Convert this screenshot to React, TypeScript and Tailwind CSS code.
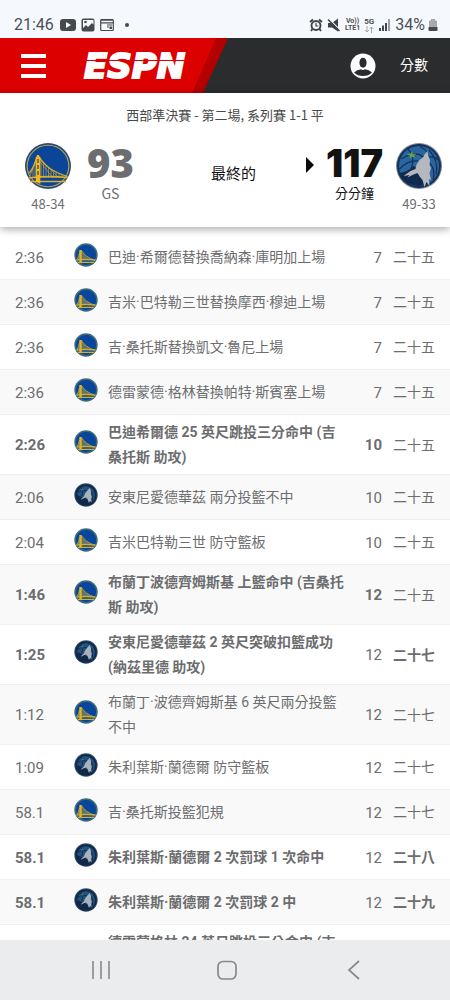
import React from "react";

type Team = "GS" | "MIN";

interface Play {
  time: string;
  team: Team;
  text: string;
  away: string;
  home: string;
  scored?: Team;
}

const plays: Play[] = [
  { time: "2:36", team: "GS", text: "巴迪·希爾德替換喬納森·庫明加上場", away: "7", home: "二十五" },
  { time: "2:36", team: "GS", text: "吉米·巴特勒三世替換摩西·穆迪上場", away: "7", home: "二十五" },
  { time: "2:36", team: "GS", text: "吉·桑托斯替換凱文·魯尼上場", away: "7", home: "二十五" },
  { time: "2:36", team: "GS", text: "德雷蒙德·格林替換帕特·斯賓塞上場", away: "7", home: "二十五" },
  { time: "2:26", team: "GS", text: "巴迪希爾德 25 英尺跳投三分命中 (吉桑托斯 助攻)", away: "10", home: "二十五", scored: "GS" },
  { time: "2:06", team: "MIN", text: "安東尼愛德華茲 兩分投籃不中", away: "10", home: "二十五" },
  { time: "2:04", team: "GS", text: "吉米巴特勒三世 防守籃板", away: "10", home: "二十五" },
  { time: "1:46", team: "GS", text: "布蘭丁波德齊姆斯基 上籃命中 (吉桑托斯 助攻)", away: "12", home: "二十五", scored: "GS" },
  { time: "1:25", team: "MIN", text: "安東尼愛德華茲 2 英尺突破扣籃成功 (納茲里德 助攻)", away: "12", home: "二十七", scored: "MIN" },
  { time: "1:12", team: "GS", text: "布蘭丁·波德齊姆斯基 6 英尺兩分投籃不中", away: "12", home: "二十七" },
  { time: "1:09", team: "MIN", text: "朱利葉斯·蘭德爾 防守籃板", away: "12", home: "二十七" },
  { time: "58.1", team: "GS", text: "吉·桑托斯投籃犯規", away: "12", home: "二十七" },
  { time: "58.1", team: "MIN", text: "朱利葉斯·蘭德爾 2 次罰球 1 次命中", away: "12", home: "二十八", scored: "MIN" },
  { time: "58.1", team: "MIN", text: "朱利葉斯·蘭德爾 2 次罰球 2 中", away: "12", home: "二十九", scored: "MIN" },
  { time: "42.0", team: "GS", text: "德雷蒙格林 24 英尺跳投三分命中 (吉桑托斯 助攻)", away: "15", home: "二十九", scored: "GS" },
];

function WarriorsLogo({ className }: { className: string }) {
  return (
    <svg viewBox="0 0 46 46" className={className} role="img" aria-label="GS">
      <circle cx="23" cy="23" r="23" fill="#274b7c" />
      <circle cx="23" cy="23" r="20.8" fill="#0a4597" stroke="#b9a24a" strokeWidth="1.1" />
      <g stroke="#dfae2c" fill="none">
        <path d="M14 13.5Q21 27 42.5 33.5M12 13.5Q9 24 4.5 30" strokeWidth="1.3" />
        <path
          d="M16 17V35M18.5 20.500V35M21 23V35M23.500 25V35M26 27V35M28.500 28.500V35M31 29.500V35M34 31V35M37 32V35M10 20V35M8 25V35"
          strokeWidth=".6"
        />
        <path d="M14.500 15L34 35M14.500 18L28 35M11.500 16L5 33" strokeWidth=".6" />
        <path d="M3.500 35Q23 32.500 42.500 34.500M5 38.500H41" strokeWidth="1.7" />
      </g>
      <path d="M10.800 14h1.100v-2h2.200v2h1.200v27l-4.500-2.500z" fill="#f8b81c" />
      <path d="M12.400 16h1.200v4h-1.200zm0 6h1.200v4h-1.200zm0 6h1.200v4h-1.200z" fill="#0a4597" />
    </svg>
  );
}

function WarriorsBadge({ className }: { className: string }) {
  return (
    <svg viewBox="0 0 24 24" className={className} role="img" aria-label="GS">
      <circle cx="12" cy="12" r="11.700" fill="#416c7c" />
      <circle cx="12" cy="12" r="10.200" fill="#08469b" />
      <path d="M7.500 7.500Q11 14 21 17.500H7.500zM5.500 10L3 17h2.500z" fill="#64736a" />
      <path d="M7.500 7.500Q11 14 21 17.200M5.500 9.500Q5 14 3 16.500" stroke="#b9a33b" strokeWidth=".9" fill="none" />
      <path d="M2.500 17.200Q12 15.500 21.500 17.200M4 19.300H20" stroke="#d5b02a" strokeWidth="1.200" fill="none" />
      <path d="M5.300 7h2.500v13.500l-2.500-1.200z" fill="#dcb425" />
    </svg>
  );
}

function WolvesLogo({ className }: { className: string }) {
  return (
    <svg viewBox="0 0 46 46" className={className} role="img" aria-label="MIN">
      <circle cx="23" cy="23" r="23" fill="#778696" />
      <circle cx="23" cy="23" r="22" fill="#14305a" />
      <circle cx="23" cy="23" r="20" fill="#2a659c" />
      <g fill="none" stroke="#14305a" strokeWidth="1.200">
        <path d="M5 16Q20 7 27 14M12 6Q20 14 15 26M3.500 26Q12 17 22 18M24 3.500Q29 6 31 9M33 14Q39 13 42 17M34 20Q40 28 37 37M33 7Q43 18 40 31" />
      </g>
      <path d="M3.500 30q8-1 14-7l9 6 7 11q-5 3-10.500 3Q8 42 3.500 30z" fill="#10294c" />
      <path
        d="M31.500 8l-3 3.500-1 2.500-4 3-3 4.500-1 4.500-5 2-7 5 6-1-2 2.500 6-3 4-1.500 2.500 4 2.500 3 2 7 2-5 3 4-.5-7 2 1-1.500-7 1.500-5-1.500-3 .5-5-2-4.500z"
        fill="#b5b9bf"
      />
      <path d="M16 8.500l.9 2.500 3.600-.2-2.700 1.900 1.500 2.500-3-1.400-2.300 2v-2.800L10.500 11l3.700-.3z" fill="#5fa04a" />
    </svg>
  );
}

function WolvesBadge({ className }: { className: string }) {
  return (
    <svg viewBox="0 0 24 24" className={className} role="img" aria-label="MIN">
      <circle cx="12" cy="12" r="11.700" fill="#37536b" />
      <circle cx="12" cy="12" r="10.800" fill="#10294a" />
      <path d="M3 12Q4 4 12 3Q20 4 21 12Q21 16 18.500 18.500L8 14z" fill="#225280" />
      <path d="M4 9Q9 6 13 8M7 5Q10 8 8 13M17.500 8Q20 13 18 18" stroke="#10294a" strokeWidth=".9" fill="none" />
      <path
        d="M15.800 5l1.300 3.500-.3 3 1 2-.7 2.500.5 3.500-1.600-1.500-1 2-1.500-4-1.500-1.500-2.200.8-3 1.500 1.200-1.800 2-1.500 1-3 2-2.500z"
        fill="#a9b1b9"
      />
      <path d="M8.500 5l.4 1.100 1.300.1-1.100.7.300 1.100-1.100-.7-1.200.6.4-1.200-1-.7 1.500-.1z" fill="#3f7573" />
    </svg>
  );
}

function StatusBar() {
  return (
    <div className="flex h-[38px] shrink-0 items-end justify-between bg-[#f5f9fe] pr-3 pb-[3px] pl-[14px] text-[16px] text-[#4c4f53]">
      <div className="flex h-5 items-center">
        <span>21:46</span>
        <svg viewBox="0 0 18 14" className="ml-[5px] h-[14px] w-[18px]" aria-hidden="true">
          <rect x="1" y="1" width="16" height="12" rx="3" fill="#47494d" />
          <path d="M7 4v6l5-3z" fill="#f5f9fe" />
        </svg>
        <svg viewBox="0 0 14 14" className="ml-1 size-[14px]" aria-hidden="true">
          <rect x=".5" y=".5" width="13" height="13" rx="2" fill="#47494d" />
          <path d="M2 10l3-3 2 2 4-4 1.500 1.500V2H2z" fill="#f5f9fe" />
          <circle cx="4.500" cy="4" r="1.300" fill="#47494d" />
        </svg>
        <svg viewBox="0 0 14 14" className="ml-[5px] size-[14px]" fill="none" stroke="#47494d" aria-hidden="true">
          <rect x=".7" y="1.500" width="12.600" height="11" rx="1" strokeWidth="1.200" />
          <path d="M1 4.800h12M1 2h12" strokeWidth="1.300" />
          <path d="M7 7h5M7 9h2" strokeWidth="1" />
          <path d="M9.500 8.500h2.500v2.500H9.500z" fill="#47494d" stroke="none" />
        </svg>
        <span className="ml-[11px] size-1 rounded-full bg-[#47494d]" />
      </div>
      <div className="flex h-5 items-center">
        <svg viewBox="0 0 14 14" className="size-[14px]" fill="none" stroke="#3f4145" aria-hidden="true">
          <circle cx="7" cy="7.500" r="4.500" strokeWidth="1.900" />
          <path d="M1 4l3-2.500M13 4l-3-2.500M3.500 11l-1.500 2M10.500 11l1.500 2" strokeWidth="1.900" />
          <path d="M7 5v3h2.200" strokeWidth="1.200" />
        </svg>
        <svg viewBox="0 0 14 14" className="ml-1 size-[14px]" aria-hidden="true">
          <path d="M1 5h4l6-4.500v13L5 9.500H1z" fill="#3f4145" />
          <path d="M2 1l11 11" stroke="#f5f9fe" strokeWidth="1.200" />
          <path d="M1 1.500l11.500 11.500" stroke="#3f4145" strokeWidth="1.600" />
        </svg>
        <span className="ml-1 text-center text-[7px] leading-[7px] font-bold">
          Vo))
          <br />
          LTE1
        </span>
        <span className="ml-1 flex flex-col items-center text-[8px] leading-[8px] font-bold">
          5G
          <svg viewBox="0 0 10 7" className="h-[7px] w-[10px]" fill="none" stroke="#a3a6aa" aria-hidden="true">
            <path d="M3 0v6M1 4l2 2 2-2M7.500 7V1M5.500 3l2-2 2 2" />
          </svg>
        </span>
        <svg viewBox="0 0 12 12" className="ml-[5px] size-3" aria-hidden="true">
          <path d="M0 9h2v3H0zM3 6.500h2V12H3zM6 4h2v8H6z" fill="#47494d" />
          <path d="M9 0h2v12H9z" fill="#9b9da1" />
        </svg>
        <span className="ml-1">34%</span>
        <svg viewBox="0 0 10 14" className="ml-[3px] h-[14px] w-[10px]" aria-hidden="true">
          <path d="M3 1h4v1.500h1.500q.5 0 .5.500v6H1V3q0-.5.500-.5H3z" fill="#a7a9ac" />
          <path d="M.5 9h9v3q0 1-1 1h-7q-1 0-1-1z" fill="#47494d" />
        </svg>
      </div>
    </div>
  );
}

function SiteHeader() {
  return (
    <header className="flex h-[55px] shrink-0 items-center justify-between bg-[#2b2c2d] pr-[22px]">
      <div className="h-full w-[228px] bg-[#b30101] [clip-path:polygon(0_0,100%_0,203px_100%,0_100%)]">
        <div className="flex h-full items-center bg-[#dd0000] pl-[21px] [clip-path:polygon(0_0,216px_0,192px_100%,0_100%)]">
          <button type="button" aria-label="選單" className="flex w-[25px] flex-col gap-[6px]">
            <span className="h-1 bg-white" />
            <span className="h-1 bg-white" />
            <span className="h-1 bg-white" />
          </button>
          <a
            href="#home"
            className="relative ml-[38px] font-['DejaVu_Sans'] text-[34px] leading-9 font-bold text-white italic [-webkit-text-stroke:2px_white]"
          >
            ESPN
            <span className="absolute -inset-x-1 top-3 h-px bg-[#dd0000]" />
          </a>
        </div>
      </div>
      <div className="flex items-center gap-[24px]">
        <button type="button" aria-label="帳戶">
          <svg viewBox="0 0 26 26" className="size-[26px]" aria-hidden="true">
            <circle cx="13" cy="13" r="12.500" fill="#fff" />
            <ellipse cx="13" cy="9.800" rx="3.600" ry="5" fill="#2b2c2d" />
            <path d="M4 19.500Q7 16.800 11 16.300q2 1.200 4 0 4 .5 7 3.200-3.500 3.500-9 3.500t-9-3.500z" fill="#2b2c2d" />
          </svg>
        </button>
        <a href="#scores" className="text-[14px] text-white">
          分數
        </a>
      </div>
    </header>
  );
}

function Scoreboard() {
  return (
    <section className="relative shrink-0 bg-white pt-3 pb-[13px] font-['Noto_Sans_CJK_TC',sans-serif] text-[#48494a] shadow-[0_2px_8px_rgba(0,0,0,0.35)]">
      <p className="text-center text-[13px] leading-5">西部準決賽 - 第二場, 系列賽 1-1 平</p>
      <div className="mt-[18px] flex items-start pr-[7px] pl-6">
        <div className="flex w-12 flex-col items-center">
          <WarriorsLogo className="size-[46px]" />
          <span className="mt-[5px] text-[13px] leading-5 text-[#6c6d6f]">48-34</span>
        </div>
        <div className="ml-[15px] flex flex-col items-center text-[#6c6d6f]">
          <strong className="font-['Noto_Sans',sans-serif] text-[40px] leading-10 font-black">93</strong>
          <span className="text-[14px] leading-5">GS</span>
        </div>
        <span className="flex-1 pt-5 pl-7 text-center text-[15px] leading-5 text-[#121213]">最終的</span>
        <svg viewBox="0 0 9 16" className="mt-[14px] mr-3 h-4 w-[9px]" aria-hidden="true">
          <path d="M1 0l8 8-8 8z" fill="#0b0b0c" />
        </svg>
        <div className="flex flex-col items-center text-[#121213]">
          <strong className="font-['Inter',sans-serif] text-[38px] leading-10 font-black">117</strong>
          <span className="text-[13px] leading-5">分分鐘</span>
        </div>
        <div className="ml-3 flex w-12 flex-col items-center">
          <WolvesLogo className="size-[46px]" />
          <span className="mt-[5px] text-[13px] leading-5 text-[#6c6d6f]">49-33</span>
        </div>
      </div>
    </section>
  );
}

function PlayRow({ play }: { play: Play }) {
  const Badge = play.team === "GS" ? WarriorsBadge : WolvesBadge;
  const weight = play.scored ? "font-bold" : "font-normal";
  return (
    <tr className="h-[45px] odd:bg-white even:bg-[#f9f9fa] *:border-b *:border-[#f0f0f1]">
      <td className={`pt-[2px] pl-[15px] text-[15px] ${weight}`}>{play.time}</td>
      <td className="pb-[5px]">
        <Badge className="size-6" />
      </td>
      <td className={`pt-[5px] pb-1 leading-[25px] ${weight}`}>{play.text}</td>
      <td className={`pt-[2px] text-right text-[15px] ${play.scored === "GS" ? "font-bold" : "font-normal"}`}>
        {play.away}
      </td>
      <td className={`pt-px pr-[15px] text-right ${play.scored === "MIN" ? "font-bold" : "font-normal"}`}>
        {play.home}
      </td>
    </tr>
  );
}

function SystemNav() {
  const icon = "size-6";
  return (
    <nav className="flex h-[60px] shrink-0 items-center justify-between bg-[#ebeced] px-[89px]">
      <button type="button" aria-label="最近">
        <svg viewBox="0 0 24 24" className={icon} fill="none" stroke="#88898b" strokeWidth="1.600" aria-hidden="true">
          <path d="M4 3v18M12 3v18M20 3v18" />
        </svg>
      </button>
      <button type="button" aria-label="首頁">
        <svg viewBox="0 0 24 24" className={icon} fill="none" stroke="#88898b" strokeWidth="1.700" aria-hidden="true">
          <rect x="5" y="3.500" width="18" height="17.500" rx="5" />
        </svg>
      </button>
      <button type="button" aria-label="返回">
        <svg viewBox="0 0 24 24" className={icon} fill="none" stroke="#88898b" strokeWidth="1.700" aria-hidden="true">
          <path d="M22 3L12 12l10 9" />
        </svg>
      </button>
    </nav>
  );
}

export default function App() {
  return (
    <div className="flex h-screen flex-col overflow-hidden bg-white font-['Roboto','Noto_Sans_CJK_TC',sans-serif]">
      <StatusBar />
      <SiteHeader />
      <Scoreboard />
      <main className="min-h-0 flex-1 overflow-hidden pt-2">
        <table className="w-full table-fixed border-separate border-spacing-0 text-[14px] text-[#6c6d6f]">
          <colgroup>
            <col className="w-[74px]" />
            <col className="w-[34px]" />
            <col />
            <col className="w-[33px]" />
            <col className="w-[68px]" />
          </colgroup>
          <tbody>
            {plays.map((play, i) => (
              <PlayRow key={i} play={play} />
            ))}
          </tbody>
        </table>
      </main>
      <SystemNav />
    </div>
  );
}
